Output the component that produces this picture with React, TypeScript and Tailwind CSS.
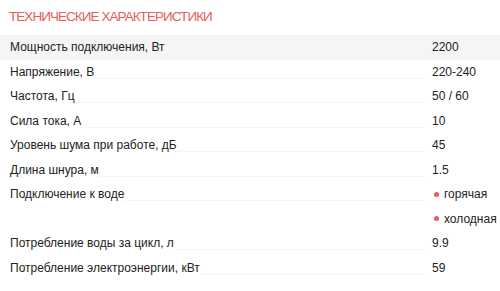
import React from "react";

type Row = { label: string; value: string; dot?: boolean };

const rows: Row[] = [
  { label: "Мощность подключения, Вт", value: "2200" },
  { label: "Напряжение, В", value: "220-240" },
  { label: "Частота, Гц", value: "50 / 60" },
  { label: "Сила тока, А", value: "10" },
  { label: "Уровень шума при работе, дБ", value: "45" },
  { label: "Длина шнура, м", value: "1.5" },
  { label: "Подключение к воде", value: "горячая", dot: true },
  { label: "", value: "холодная", dot: true },
  { label: "Потребление воды за цикл, л", value: "9.9" },
  { label: "Потребление электроэнергии, кВт", value: "59" },
];

export default function App() {
  return (
    <div
      className="w-[500px] h-[291px] bg-white overflow-hidden text-[#222]"
      style={{ fontFamily: '"Liberation Sans", Arial, sans-serif' }}
    >
      <div className="h-[35px] flex items-center pl-[9px] text-[13.5px] text-[#ea5c58] tracking-[-0.95px]">
        ТЕХНИЧЕСКИЕ ХАРАКТЕРИСТИКИ
      </div>
      <div className="flex flex-col">
        {rows.map((r, i) => (
          <div
            key={i}
            className={`h-[24.5px] flex items-center text-[12px] ${i === 0 ? "bg-[#f5f5f5]" : ""}`}
          >
            <div className="flex-1 flex items-baseline pl-[10px] pr-[7px]">
              <span className="whitespace-nowrap">{r.label}</span>
              {r.label && i !== 0 ? (
                <span className="flex-1 border-b border-dotted border-[#ededed] translate-y-[3px]" />
              ) : null}
            </div>
            <div className="w-[68px] flex items-center whitespace-nowrap">
              {r.dot ? (
                <span className="w-[5px] h-[5px] rounded-full bg-[#ea5c58] mr-[5px] ml-[2px]" />
              ) : null}
              <span>{r.value}</span>
            </div>
          </div>
        ))}
      </div>
    </div>
  );
}
